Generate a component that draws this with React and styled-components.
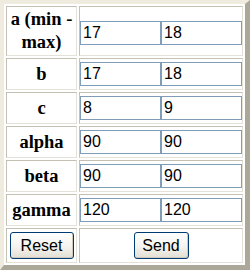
import React from 'react';
import styled, { createGlobalStyle } from 'styled-components';

const Global = createGlobalStyle`
  html, body {
    margin: 0;
    padding: 0;
    background: #ffffff;
  }
`;

const Frame = styled.form`
  box-sizing: border-box;
  width: 250px;
  height: 270px;
  border-style: solid;
  border-width: 4px 5px 5px 4px;
  border-color: #efebde #aca899 #aca899 #efebde;
  background: #ffffff;
  padding: 2px;
  display: grid;
  grid-template-columns: 71px 1fr;
  grid-template-rows: 50px repeat(5, 32px) 35px;
  gap: 2px;
`;

const Cell = styled.div`
  box-sizing: border-box;
  border: 1px solid;
  border-color: #c4c1b4 #e4e2d8 #e4e2d8 #c4c1b4;
  display: flex;
  align-items: center;
  justify-content: ${p => (p.$center ? 'center' : 'flex-start')};
  padding-top: ${p => p.$drop || 0}px;
`;

const Label = styled(Cell)`
  justify-content: center;
  text-align: center;
  font-family: "Liberation Serif", "Times New Roman", serif;
  font-weight: bold;
  font-size: 18.5px;
  line-height: 23px;
  color: #000;
`;

const Field = styled.input`
  box-sizing: border-box;
  width: 50%;
  height: 24px;
  margin: 0;
  border: 1px solid #7f9db9;
  padding: 1px 2px;
  font-family: "Liberation Sans", Arial, sans-serif;
  font-size: 16px;
  color: #000;
  background: #fff;
  outline: none;
`;

const Button = styled.button`
  box-sizing: border-box;
  width: ${p => p.$w}px;
  height: 27px;
  margin: 0;
  padding: 0;
  border: 1px solid #003c74;
  border-radius: 3px;
  background: linear-gradient(#ffffff, #f4f3ee 55%, #e2dfd3);
  box-shadow: inset -1px -1px 0 #d0cabd;
  font-family: "Liberation Sans", Arial, sans-serif;
  font-size: 16px;
  color: #000;
`;

const rows = [
  ['a (min - max)', '17', '18', 4],
  ['b', '17', '18', 0],
  ['c', '8', '9', 0],
  ['alpha', '90', '90', 0],
  ['beta', '90', '90', 0],
  ['gamma', '120', '120', 0],
];

export default function App() {
  return (
    <>
      <Global />
      <Frame onSubmit={e => e.preventDefault()}>
        {rows.map(([label, min, max, drop]) => (
          <React.Fragment key={label}>
            <Label>{label}</Label>
            <Cell $drop={drop}>
              <Field defaultValue={min} />
              <Field defaultValue={max} />
            </Cell>
          </React.Fragment>
        ))}
        <Cell $center>
          <Button type="reset" $w={64}>Reset</Button>
        </Cell>
        <Cell $center>
          <Button type="submit" $w={55}>Send</Button>
        </Cell>
      </Frame>
    </>
  );
}
